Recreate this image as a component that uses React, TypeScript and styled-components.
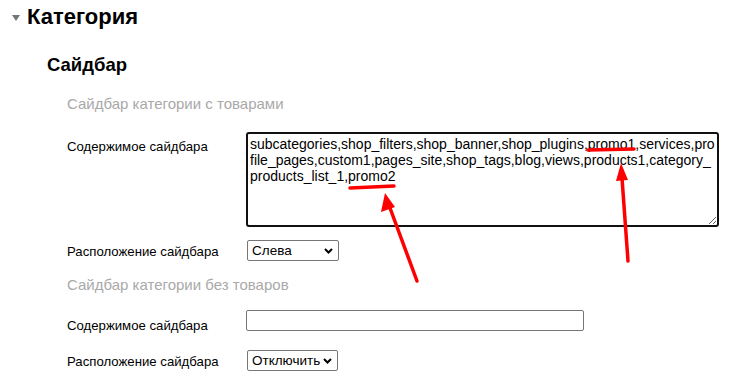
import styled, {createGlobalStyle} from "styled-components"

const GlobalStyle = createGlobalStyle`
  html, body {
    margin: 0;
    padding: 0;
    background: #fff;
  }
  body {
    font-family: "Liberation Sans", Arial, sans-serif;
    color: #000;
  }
`

const Page = styled.div`
  position: relative;
  width: 752px;
  height: 392px;
  overflow: hidden;
`

const CategoryHeader = styled.h2`
  margin: 0;
  padding: 5px 0 0 12px;
  display: flex;
  align-items: center;
  gap: 7px;
  font-size: 22px;
  font-weight: bold;
  line-height: 24px;
`

const Caret = styled.span`
  width: 0;
  height: 0;
  border-left: 4px solid transparent;
  border-right: 4px solid transparent;
  border-top: 6px solid #777;
  margin-top: 1px;
`

const SectionTitle = styled.h3`
  margin: 0;
  padding: 25px 0 0 47px;
  font-size: 18.5px;
  font-weight: bold;
  line-height: 22px;
`

const Body = styled.div`
  padding-left: 67px;
`

const GroupTitle = styled.div<{$top: number}>`
  margin-top: ${p => p.$top}px;
  font-size: 15px;
  line-height: 18px;
  color: #a9a9a9;
`

const Row = styled.div<{$top: number}>`
  display: grid;
  grid-template-columns: 179px auto;
  align-items: start;
  margin-top: ${p => p.$top}px;
`

const Label = styled.label<{$pad?: number}>`
  font-size: 13.2px;
  line-height: 16px;
  padding-top: ${p => p.$pad || 0}px;
`

const Controls = styled.div`
  display: flex;
`

const Area = styled.textarea`
  box-sizing: border-box;
  width: 473px;
  height: 95px;
  margin: 0;
  padding: 2px 2px;
  border: 2px solid #111;
  border-radius: 3px;
  font-family: "Liberation Sans", Arial, sans-serif;
  font-size: 14px;
  line-height: 16px;
  color: #000;
  resize: both;
  outline: none;
`

const Input = styled.input`
  box-sizing: border-box;
  width: 338px;
  height: 21px;
  margin: 0;
  border: 1px solid #767676;
  border-radius: 2px;
  font-family: "Liberation Sans", Arial, sans-serif;
  font-size: 14px;
`

const SelectWrap = styled.div`
  position: relative;
  display: inline-flex;
  margin-left: 1px;
`

const Select = styled.select<{$w: number}>`
  appearance: none;
  box-sizing: border-box;
  width: ${p => p.$w}px;
  height: 21px;
  margin: 0;
  padding: 0 14px 0 4px;
  border: 1px solid #767676;
  border-radius: 2px;
  background: #fff;
  color: #000;
  font-family: "Liberation Sans", Arial, sans-serif;
  font-size: 13.5px;
`

const Chevron = styled.svg`
  position: absolute;
  right: 6px;
  top: 8px;
  pointer-events: none;
`

const Marks = styled.svg`
  position: absolute;
  left: 0;
  top: 0;
  pointer-events: none;
`

const sidebarValue =
  "subcategories,shop_filters,shop_banner,shop_plugins,promo1,services,profile_pages,custom1,pages_site,shop_tags,blog,views,products1,category_products_list_1,promo2"

const PositionSelect = (props: {width: number; value: string}) => (
  <SelectWrap>
    <Select $w={props.width} defaultValue={props.value}>
      <option value="left">Слева</option>
      <option value="right">Справа</option>
      <option value="off">Отключить</option>
    </Select>
    <Chevron width="9" height="6" viewBox="0 0 9 6">
      <path d="M1 1 L4.5 4.5 L8 1" stroke="#000" strokeWidth="2" fill="none" />
    </Chevron>
  </SelectWrap>
)

export default function App() {
  return (
    <Page>
      <GlobalStyle />
      <CategoryHeader>
        <Caret />
        Категория
      </CategoryHeader>
      <SectionTitle>Сайдбар</SectionTitle>
      <Body>
        <GroupTitle $top={19}>Сайдбар категории с товарами</GroupTitle>
        <Row $top={19}>
          <Label $pad={7}>Содержимое сайдбара</Label>
          <Controls>
            <Area defaultValue={sidebarValue} spellCheck={false} />
          </Controls>
        </Row>
        <Row $top={13}>
          <Label $pad={4}>Расположение сайдбара</Label>
          <Controls>
            <PositionSelect width={92} value="left" />
          </Controls>
        </Row>
        <GroupTitle $top={15}>Сайдбар категории без товаров</GroupTitle>
        <Row $top={16}>
          <Label $pad={8}>Содержимое сайдбара</Label>
          <Controls>
            <Input type="text" />
          </Controls>
        </Row>
        <Row $top={16}>
          <Label $pad={4}>Расположение сайдбара</Label>
          <Controls>
            <PositionSelect width={91} value="off" />
          </Controls>
        </Row>
      </Body>
      <Marks width="752" height="392" viewBox="0 0 752 392">
        <g stroke="#f00" strokeWidth="3.5" strokeLinecap="round" fill="none">
          <path d="M350 188 L394 186" />
          <path d="M588 150 L634 149" />
          <path d="M417 281 L390 208" />
          <path d="M628 261 L622 178" />
        </g>
        <g fill="#f00">
          <path d="M385 193 L381 212 L395 207 Z" />
          <path d="M621 163 L616 181 L628 180 Z" />
        </g>
      </Marks>
    </Page>
  )
}
